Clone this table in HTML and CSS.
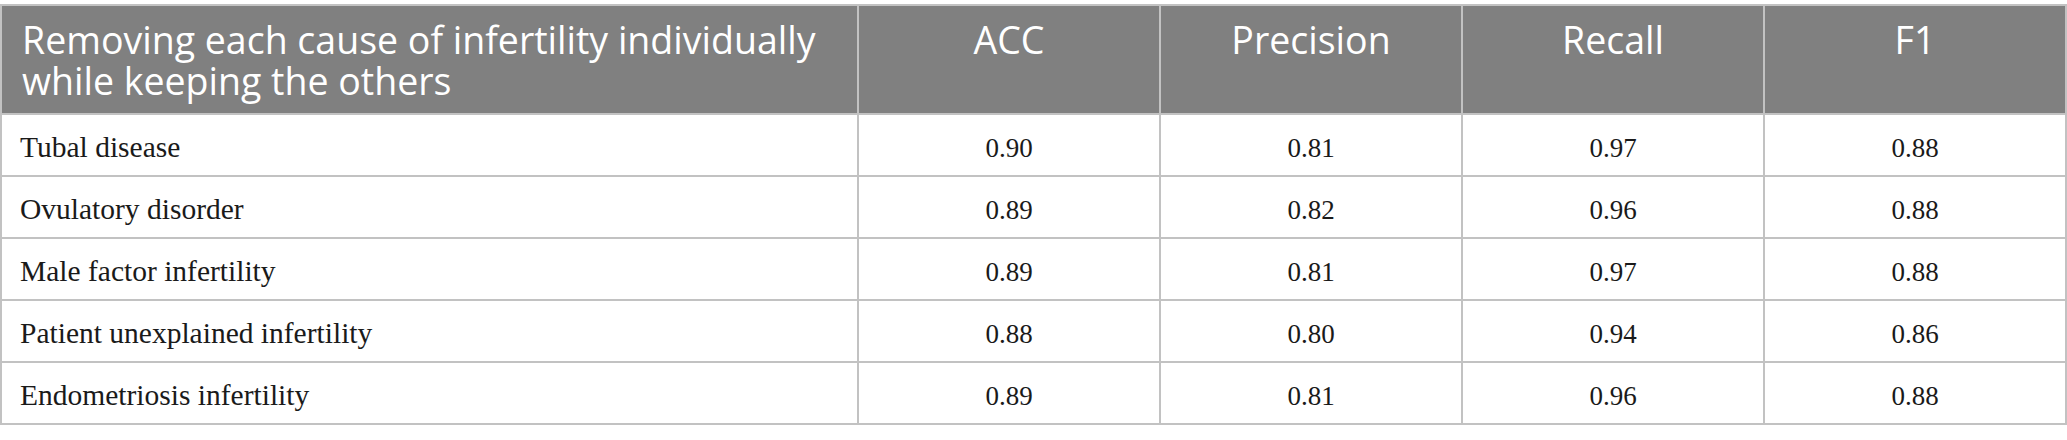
FILE: index.html
```html
<!DOCTYPE html>
<html lang="en">
<head>
<meta charset="utf-8">
<title>Ablation table</title>
<link rel="stylesheet" href="styles.css">
</head>
<body>
<div class="page">
  <table class="results">
    <colgroup>
      <col class="c-name">
      <col class="c-num">
      <col class="c-num">
      <col class="c-num">
      <col class="c-num">
    </colgroup>
    <thead>
      <tr>
        <th class="h-name">Removing each cause of infertility individually while keeping the others</th>
        <th>ACC</th>
        <th>Precision</th>
        <th>Recall</th>
        <th>F1</th>
      </tr>
    </thead>
    <tbody>
      <tr><td class="name">Tubal disease</td><td>0.90</td><td>0.81</td><td>0.97</td><td>0.88</td></tr>
      <tr><td class="name">Ovulatory disorder</td><td>0.89</td><td>0.82</td><td>0.96</td><td>0.88</td></tr>
      <tr><td class="name">Male factor infertility</td><td>0.89</td><td>0.81</td><td>0.97</td><td>0.88</td></tr>
      <tr><td class="name">Patient unexplained infertility</td><td>0.88</td><td>0.80</td><td>0.94</td><td>0.86</td></tr>
      <tr><td class="name">Endometriosis infertility</td><td>0.89</td><td>0.81</td><td>0.96</td><td>0.88</td></tr>
    </tbody>
  </table>
</div>
</body>
</html>
```
FILE: styles.css
```css
html, body {
  margin: 0;
  padding: 0;
  background: #ffffff;
}

.page {
  padding-top: 4px;
}

.results {
  width: 2067px;
  table-layout: fixed;
  border-collapse: separate;
  border-spacing: 0;
  border-top: 2px solid #c2c2c2;
  border-left: 2px solid #c2c2c2;
}

.c-name { width: 857px; }
.c-num { width: 302px; }

.results th,
.results td {
  box-sizing: border-box;
  border-right: 2px solid #c2c2c2;
  border-bottom: 2px solid #c2c2c2;
}

.results th {
  background: #808080;
  color: #ffffff;
  font-family: "Open Sans", "DejaVu Sans", sans-serif;
  font-weight: 400;
  font-size: 37.5px;
  line-height: 41px;
  text-align: center;
  vertical-align: top;
  height: 109px;
  padding: 13px 20px 0 20px;
}

.results th.h-name {
  text-align: left;
}

.results td {
  font-family: "Liberation Serif", "Times New Roman", serif;
  font-size: 27px;
  line-height: 30px;
  color: #1a1a1a;
  text-align: center;
  vertical-align: top;
  height: 62px;
  padding: 18px 18px 0 18px;
}

.results td.name {
  text-align: left;
  font-size: 29.5px;
  padding-top: 17px;
}
```
